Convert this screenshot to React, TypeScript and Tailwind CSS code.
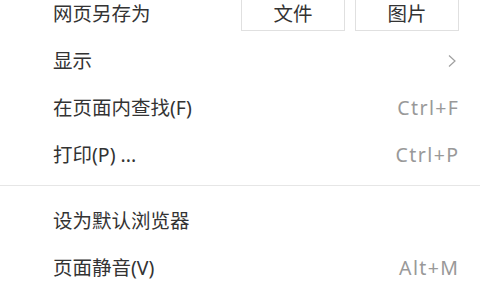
import React from "react";

const Row = ({ label, right }: { label: string; right?: React.ReactNode }) => (
  <div className="h-[47px] flex items-center justify-between pl-[53px] pr-[22px]">
    <span className="text-[#333333]">{label}</span>
    {right}
  </div>
);

const Shortcut = ({ k }: { k: string }) => (
  <span className="text-[#999999] tracking-[1.4px] -mr-[1.4px]">{k}</span>
);

export default function App() {
  return (
    <div
      className="w-[480px] h-[300px] bg-white overflow-hidden text-[19.5px] leading-none"
      style={{ fontFamily: '"Noto Sans", "Noto Sans CJK SC", sans-serif' }}
    >
      <div className="-mt-[10px]">
        <div className="h-[47px] flex items-center justify-between pl-[53px] pr-[21px]">
          <span className="text-[#333333]">网页另存为</span>
          <div className="flex gap-[10px]">
            <button className="w-[104px] h-[34px] border border-[#e0e0e0] bg-white text-[#333333] flex items-center justify-center">
              文件
            </button>
            <button className="w-[104px] h-[34px] border border-[#e0e0e0] bg-white text-[#333333] flex items-center justify-center">
              图片
            </button>
          </div>
        </div>
        <Row
          label="显示"
          right={
            <svg width="10" height="14" viewBox="0 0 10 14" className="mr-[1px]">
              <path d="M2 1.5 L8 7 L2 12.5" fill="none" stroke="#a0a0a0" strokeWidth="1.2" />
            </svg>
          }
        />
        <Row label="在页面内查找(F)" right={<Shortcut k="Ctrl+F" />} />
        <Row label="打印(P) ..." right={<Shortcut k="Ctrl+P" />} />
        <div className="pt-[7px] pb-[11px]">
          <div className="h-px bg-[#e6e6e6]" />
        </div>
        <Row label="设为默认浏览器" />
        <Row label="页面静音(V)" right={<Shortcut k="Alt+M" />} />
      </div>
    </div>
  );
}
